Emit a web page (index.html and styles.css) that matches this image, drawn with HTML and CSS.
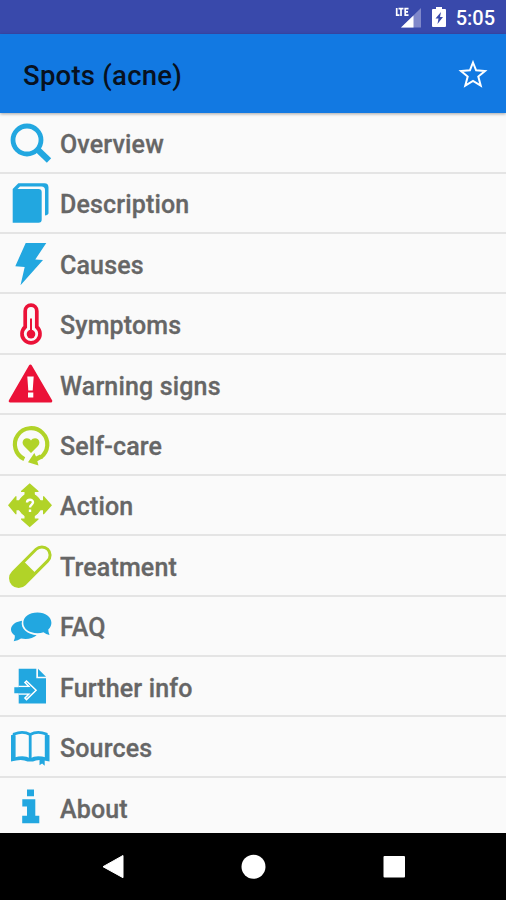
FILE: index.html
```
<!DOCTYPE html>
<html lang="en">
<head>
<meta charset="utf-8">
<title>Spots (acne)</title>
<link rel="stylesheet" href="styles.css">
</head>
<body>
<div class="screen">
  <div class="status">
    <svg class="signal" width="26" height="22" viewBox="0 0 26 22"><path d="M26 2V21.500H6Z" fill="#8088ca"/><path d="M18.500 9.500V21.500H6Z" fill="#fff"/><path d="M1.700 2V9.200H4.500M3.500 2.700H8.500M6 2.700V10M13.500 2.700H10.200V9.200H13.500M10.200 5.900H13" fill="none" stroke="#fff" stroke-width="1.700"/></svg>
    <svg class="battery" width="14" height="22" viewBox="0 0 14 22"><path d="M1 3H4V1H10V3H13Q14 3 14 4V20Q14 21 13 21H1Q0 21 0 20V4Q0 3 1 3Z" fill="#fff"/><path d="M9 6 3.500 12.500H6.500L5.500 18 11 11H8Z" fill="#3949ab"/></svg>
    <span class="time">5:05</span>
  </div>
  <header class="bar">
    <h1 class="title">Spots (acne)</h1>
    <svg class="star" width="30" height="30" viewBox="0 0 30 30"><path d="M15 3.500 18.100 11.300 27 12 20.300 17.600 22.700 26.500 15 21.900 7.300 26.500 9.700 17.600 3 12 11.900 11.300Z" fill="none" stroke="#fff" stroke-width="2"/></svg>
  </header>
  <main class="list">
    <div class="row"><svg class="icon blue" viewBox="0 0 60 60"><circle cx="27" cy="27" r="14" fill="none" stroke="currentColor" stroke-width="4.800"/><path d="M36.500 35.500 49 47.500" stroke="currentColor" stroke-width="6.200"/></svg><span>Overview</span></div>
    <div class="row"><svg class="icon blue" viewBox="0 0 60 60"><path d="M12.700 16 18.300 10.200H44.500Q48.500 10.200 48.500 14.500V40.500Q47.500 42.500 45 42.500V17Q45 13.500 41.500 13.500H20L17.500 16H38.500Q41.700 16 41.700 19V46.500Q41.700 49.700 38.500 49.700H12.700Z" fill="currentColor"/></svg><span>Description</span></div>
    <div class="row"><svg class="icon blue" viewBox="0 0 60 60"><path d="M25.700 9.900H46.300L35.300 26.500 43 27 20.500 52.300 24.700 34 15.300 33.300Z" fill="currentColor"/></svg><span>Causes</span></div>
    <div class="row"><svg class="icon red" viewBox="0 0 60 60"><path d="M25.200 33V17a5.800 5.800 0 0 1 11.600 0V33a9 9 0 1 1-11.600 0Z" fill="none" stroke="currentColor" stroke-width="3.700"/><path d="M31 24.500V40" stroke="currentColor" stroke-width="2"/><circle cx="31" cy="40.100" r="4.300" fill="currentColor"/></svg><span>Symptoms</span></div>
    <div class="row"><svg class="icon red" viewBox="0 0 60 60"><path d="M30.400 12 10.200 47H50.800Z" fill="currentColor" stroke="currentColor" stroke-width="3" stroke-linejoin="round"/><path d="M27.300 22.500H33.700L32.700 36.500H28.300ZM28 38.600H33.300V43.600H28Z" fill="#fff"/></svg><span>Warning signs</span></div>
    <div class="row"><svg class="icon green" viewBox="0 0 60 60"><path d="M24.300 44.100A16.200 16.200 0 1 1 40.500 42.600" fill="none" stroke="currentColor" stroke-width="4.200"/><path d="M34.300 37.900 36 41.500 40 39.500 43 43 37.300 46.300 38.500 50.500 28 47.200Z" fill="currentColor"/><path d="M31 38 24 31C22 28.800 22.200 25.800 24 24.200 26.200 22.400 29.500 23 31 25.500 32.500 23 35.800 22.400 38 24.200 39.800 25.800 40 28.800 38 31Z" fill="currentColor"/></svg><span>Self-care</span></div>
    <div class="row"><svg class="icon green" viewBox="0 0 60 60"><path d="M29.700 8.300 38.500 16V17H34.800V19.500L40.500 25.300H43V21.300H44L52 30.200 44 39.300H43V35.300H40.500L34.800 41V43.500H38.500V44.500L29.700 52.200 21 44.500V43.500H24.500V41L19 35.300H16.500V39.300H15.500L8 30.200 15.500 21.300H16.500V25.300H19L24.500 19.500V17H21V16Z" fill="currentColor"/><circle cx="29.800" cy="30.200" r="11.600" fill="currentColor"/><path d="M27 27.500C27 23.800 33 23.800 33 27.300 33 29.600 30 29.600 30 32.500M30 34.400V37" fill="none" stroke="#fff" stroke-width="2.400"/></svg><span>Action</span></div>
    <div class="row"><svg class="icon green" viewBox="0 0 60 60"><g transform="rotate(-45 30.300 30.700)"><rect x="5.700" y="22.500" width="49.200" height="16.400" rx="8.200" fill="none" stroke="currentColor" stroke-width="3"/><path d="M29.500 22.500H14a8.200 8.200 0 0 0 0 16.400H29.500Z" fill="currentColor"/></g></svg><span>Treatment</span></div>
    <div class="row"><svg class="icon blue" viewBox="0 0 60 60"><path d="M22 24.700C10.500 26.500 8 34.500 14.800 39.500Q15.300 42.500 13.700 45.200 18 44.700 21 42.500C27 43.700 33 42.500 36.700 39.200 28 38.500 20 33 22 24.700Z" fill="currentColor"/><path d="M37.500 16.500C29 16.500 23.300 21 23.300 26.800 23.300 32.700 29 37.200 37.500 37.200Q40.800 37.200 43.500 36.300 46 38.600 49.500 39 48.300 36.500 48.300 33.500C50.500 31.500 51.400 29.300 51.400 26.800 51.400 21 45.500 16.500 37.500 16.500Z" fill="currentColor"/></svg><span>FAQ</span></div>
    <div class="row"><svg class="icon blue" viewBox="0 0 60 60"><path d="M18.700 12.700H36.300V22.300H46V47.400H18.700ZM38 12.700 46 20.800H38Z" fill="currentColor"/><path d="M18.700 30.500H29L25 26.500 26.500 25 36 34.200 26.500 43.500 25 42 29 38H18.700" fill="none" stroke="#fff" stroke-width="1.600"/><path d="M14.300 31.300H31L26 26.300 34.800 34.200 26 42.200 31 37.200H14.300Z" fill="currentColor"/></svg><span>Further info</span></div>
    <div class="row"><svg class="icon blue" viewBox="0 0 60 60"><path d="M11 18.200 14.200 17.200V40.500Q24 37.500 30.200 41.200 36.500 37.500 46.200 40.500V17.200L49.500 18.200V44.500Q38 41.500 33 44.500H27.500Q22 41.500 11 44.500Z" fill="currentColor"/><path d="M14.200 41V17Q23 13.500 30.200 17.500 37.500 13.500 46.200 17V41M30.200 17.500V42" fill="none" stroke="currentColor" stroke-width="2.800"/><path d="M39.500 42H44.700V48.800L42.100 46.600 39.500 48.300Z" fill="currentColor"/></svg><span>Sources</span></div>
    <div class="row"><svg class="icon blue" viewBox="0 0 60 60"><path d="M27 12.500H34V19.200H27ZM22.300 22.300H35.300V38.700H39.300V46.200H22.200V38.700H27V29.500H22.300Z" fill="currentColor"/></svg><span>About</span></div>
  </main>
  <nav class="nav">
    <svg width="506" height="67" viewBox="0 0 506 67"><path d="M103 33.700 123 22.500V44.700Z" fill="#fff" stroke="#fff" stroke-linejoin="round"/><circle cx="253.500" cy="33.700" r="12" fill="#fff"/><rect x="383.500" y="23" width="21.500" height="21.500" rx="1" fill="#fff"/></svg>
  </nav>
</div>
</body>
</html>
```
FILE: styles.css
```
* { box-sizing: border-box; }
body { margin: 0; font-family: Roboto, "Liberation Sans", sans-serif; }
.screen { width: 506px; height: 900px; display: flex; flex-direction: column; overflow: hidden; background: #fafafa; }
.status { height: 34px; flex: none; background: #3949ab; display: flex; align-items: center; justify-content: flex-end; padding-right: 11px; color: #fff; }
.signal { margin-right: 11px; }
.battery { margin-right: 10px; }
.time { font-size: 20px; font-weight: 500; line-height: 34px; padding-top: 2px; }
.bar { height: 78.5px; flex: none; background: #1279e2; display: flex; align-items: center; justify-content: space-between; padding: 2px 18px 0 23px; box-shadow: 0 1px 3px rgba(0, 0, 0, .35); z-index: 1; }
.title { margin: 0; padding-top: 2px; font-size: 27.5px; font-weight: 500; letter-spacing: .25px; color: #07111f; }
.list { flex: 1; min-height: 0; overflow: hidden; padding-top: .6px; }
.row { height: 60.45px; display: flex; align-items: center; border-bottom: 2px solid #e4e4e4; color: #666; font-size: 25px; font-weight: 500; letter-spacing: .15px; -webkit-text-stroke: .3px #666; }
.row span { padding-top: 4px; }
.icon { width: 60px; height: 60px; flex: none; align-self: flex-start; margin-top: -.6px; }
.blue { color: #22a7e0; }
.red { color: #eb1238; }
.green { color: #b1d328; }
.nav { height: 67px; flex: none; background: #000; z-index: 1; }
.nav svg { display: block; }
```
